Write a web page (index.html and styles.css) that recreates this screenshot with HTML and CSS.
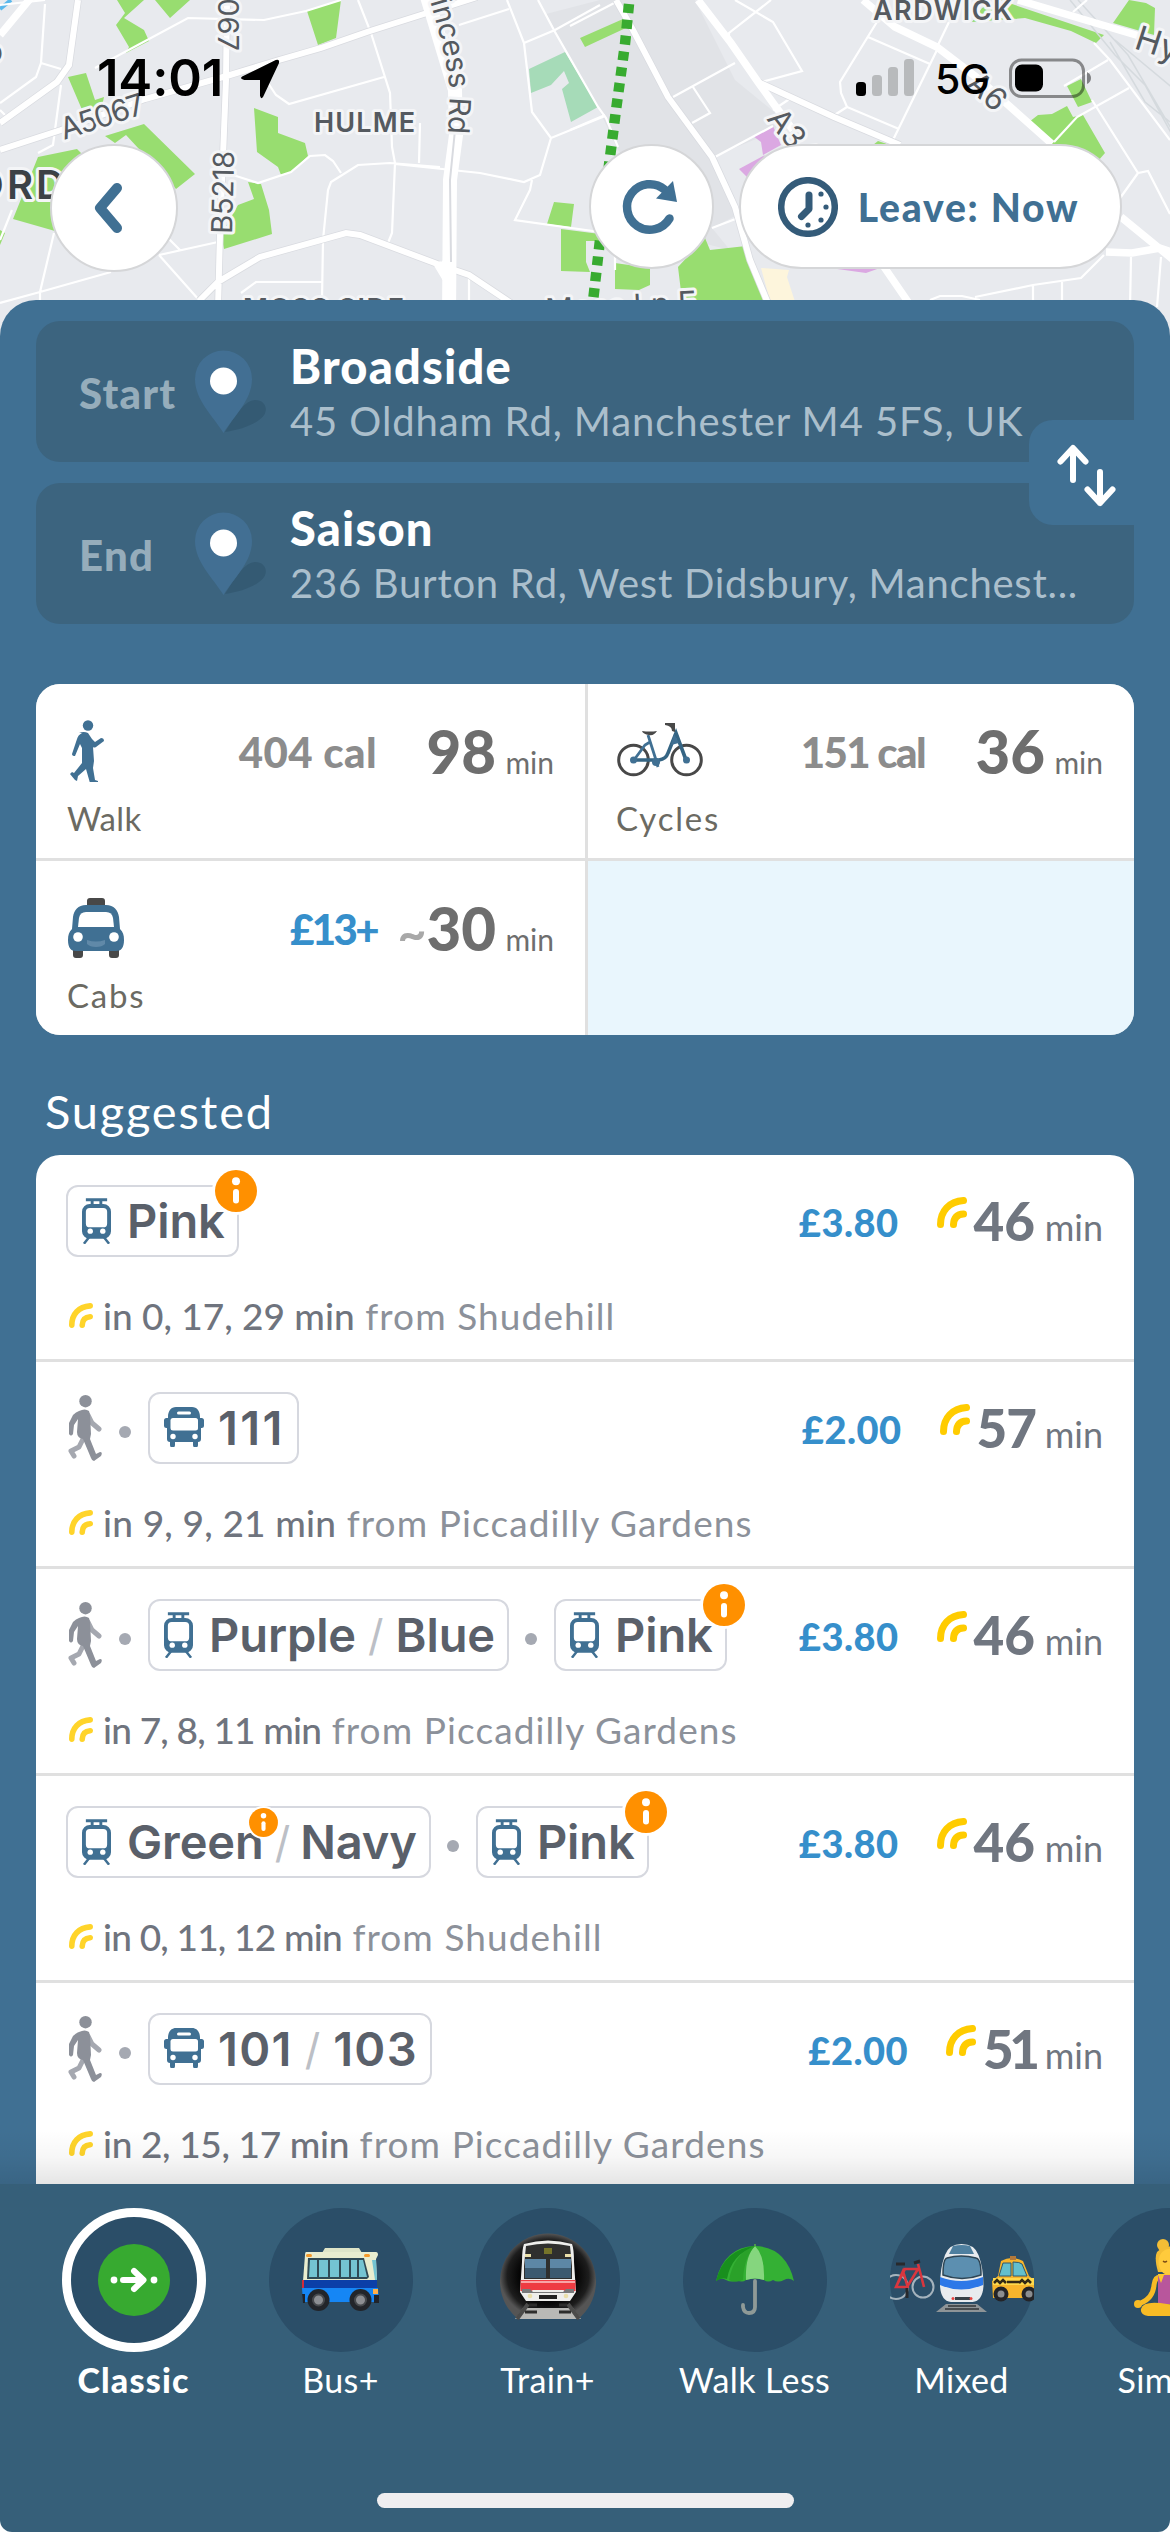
FILE: index.html
```html
<!DOCTYPE html>
<html lang="en">
<head>
<meta charset="utf-8">
<title>Routes</title>
<link rel="stylesheet" href="styles.css">
</head>
<body>
<svg class="sprite" width="0" height="0" aria-hidden="true">
  <symbol id="i-tram" viewBox="0 0 30 48">
    <path d="M4 1h22v3h-5v4h-3V4h-6v4H9V4H4z" fill="#407093"/>
    <path fill-rule="evenodd" d="M8 7h14a8 8 0 0 1 8 8v20a8 8 0 0 1-8 8H8a8 8 0 0 1-8-8V15a8 8 0 0 1 8-8zM8 11a4 4 0 0 0-4 4v12a4 4 0 0 0 4 4h14a4 4 0 0 0 4-4V15a4 4 0 0 0-4-4z" fill="#407093"/>
    <circle cx="8.500" cy="35" r="2.800" fill="#fff"/><circle cx="21.500" cy="35" r="2.800" fill="#fff"/>
    <path d="M7.500 41L2 48M22.500 41L28 48" stroke="#407093" stroke-width="2.600"/>
  </symbol>
  <symbol id="i-bus" viewBox="0 0 40 40">
    <path d="M12 0h16c5 0 8 4 8 10v1h1.500a2.500 2.500 0 0 1 2.500 2.500v5a2.500 2.500 0 0 1-2.500 2.500H37v11a3 3 0 0 1-3 3v3a2.500 2.500 0 0 1-5 0v-3H11v3a2.500 2.500 0 0 1-5 0v-3a3 3 0 0 1-3-3V21h-.5A2.500 2.500 0 0 1 0 18.500v-5A2.500 2.500 0 0 1 2.500 11H4v-1C4 4 7 0 12 0z" fill="#407093"/>
    <rect x="6.500" y="11" width="27.500" height="12.500" rx="2.500" fill="#fff"/><rect x="13" y="4.500" width="14" height="3" rx="1.500" fill="#fff"/>
    <circle cx="9" cy="29.500" r="2.700" fill="#fff"/><circle cx="31" cy="29.500" r="2.700" fill="#fff"/>
  </symbol>
  <symbol id="i-person" viewBox="0 0 34 66">
    <circle cx="17.500" cy="6.200" r="6.200" fill="#8c9099"/>
    <path d="M20 20l4 8 7 6M15 44l-4 8-8 4 3 5" fill="none" stroke="#a5a8b0" stroke-width="5" stroke-linecap="round" stroke-linejoin="round"/>
    <path d="M11 16q6-3 10 0l1 4 1 19-1 5 6 15 4-2q3 0 1 4l-7 5q-2 0-3-3l-8-19q-6-1-6-7l1-13-4 6-1 9q-2 3-4 0V28l4-8q3-3 6-4z" fill="#8c9099"/>
  </symbol>
  <symbol id="i-walk" viewBox="0 0 36 62">
    <circle cx="20" cy="5.500" r="5.200" fill="#407093"/>
    <path d="M11 13q5-2 9 0l4 6 3 3 6-4q3 0 3 3l-8 6q-2 1-3 0l1 14-1 7 2 12 3 1v2h-8l-4-14-8 7-1 5-2-1-5-6 2-2 2 1 8-10V28l-2-4-5 12q-3 0-3-2l5-15q1-4 5-6z" fill="#407093"/>
  </symbol>
  <symbol id="i-wave" viewBox="0 0 30 31">
    <path d="M3.500 27.500C3.500 14 12 4.500 26.500 3.500M16.500 27.500q.5-10 10-10.500" fill="none" stroke="currentColor" stroke-width="7" stroke-linecap="round"/>
  </symbol>
  <symbol id="i-info" viewBox="0 0 48 48">
    <circle cx="24" cy="24" r="24" fill="#fff"/><circle cx="24" cy="24" r="21" fill="#ff9000"/>
    <circle cx="24" cy="14.200" r="4" fill="#fff"/><rect x="21" y="22" width="6" height="14.500" rx="3" fill="#fff"/>
  </symbol>
  <symbol id="i-pin" viewBox="0 0 72 84">
    <path d="M30 82C42 62 50 51 60 50c12 0 15 13 4 20-8 6-20 10-34 12z" fill="#345a73"/>
    <path d="M28.500 83C18 66 0 50 0 29a28.500 28.500 0 0 1 57 0c0 21-18 37-28.500 54z" fill="#426f93"/>
    <circle cx="28.500" cy="31" r="13.500" fill="#fff"/>
  </symbol>
</svg>

<main class="screen">
  <header class="top">
    <svg class="map" viewBox="0 0 1170 340" aria-hidden="true">
      <rect width="1170" height="340" fill="#e8eaee"/>
      <path d="M546 14L600 0H695L735 80 790 125 715 156 737 215 712 228 730 250 690 240 618 150 600 112 565 48z" fill="#e1e3e7"/>
      <g fill="#98dd70">
        <path d="M117 0h27l-20 18 20 12 5 11-23 12 3-6-13-22 9-12zM155 0h35l-20 18zM307 11l34-11-5 38-18 7zM68 77l18-4 9 27 9-3-4 18-17-3zM105 136l39-12 51 50-19 15-50-54-11 8zM38 157l39-8 20 20-42 62-42-12zM254 108l24 9v16l27 10 3 13-17 16-10 3-3-8-21-15zM248 182l13 2 8 26 3 24-48 15-3-14 17-30 16-6zM580 38l43-19 5 8-43 20zM554 202l20 2-3 23-24-3zM561 229l39 5v7h-14v21l4 10-29-1zM0 230l5 3-5 12z"/>
        <path d="M1000 0l104 35-8 8-25-12-46-13-53 4 10-14zM1129 0l17 3 9 5-1 27-41-12zM1067 86l14-7 11 23-14 5zM1029 122l9-7 14-1 15-8 6 11 10-2 22 38-7 8-48-17zM873 145l5-4 12 4zM678 267l27-29 5 12 36-4 17 54h-81zM615 263l35 5v17l-11 5-24-1z"/>
      </g>
      <path d="M529 69l36-17 33 55-27 15-9-33 7-6-5-12-13 14-20 8z" fill="#a6dbb8"/>
      <path d="M753 136l20-10 8 19-18 10-2-13zM739 169l26-14-17 23zM830 268h50l-14 5z" fill="#dba8e2"/>
      <path d="M761 268l28 2-2 7 10 31h-25z" fill="#fdf5dc"/>
      <path d="M1070 0l45 55 30 30 30 55M1078 0l50 55 50 85M1110 42l35 60 25 20M1115 40l60 50" fill="none" stroke="#d5dade" stroke-width="1.500"/>
      <path d="M0 9L11 0" stroke="#5bb8ec" stroke-width="4"/>
      <g fill="none" stroke="#fff" stroke-width="2.200">
        <path d="M95 68L188 18l76 2 42-9 35-11M45 4l-4 59 20 6M41 63l-5 14-36 26M358 0l13 33 19 60 2 54 3 16-3 70-4 10M268 83l8 12 13 9 95-27M230 174l28 9 33-11 19-16 15-1 8 6 8 12M322 300l1-60 5-50 3-8 27-17 32-2 50 4M395 164l85 9 44 9 16-7 11-37 54-22M420 123l-1 40M459 25l50-16M507 0l17 43 8 69 19 26M538 0l17 32 43 75 8 11 12 29M524 43l31-13L600 5M532 180l-2 10-15 30 85 12M0 303l40-11 71-20M40 308v-16l14-59M159 255l59-13M159 255l40 45M168 238l12 12M241 293l15-11h66M469 277v30M61 85l-8 60-15 8M0 240l12-30M0 5l45-5M0 110l5 5"/>
        <path d="M735 0l38 22 29 49-44 12M771 0l-42 33v10M673 97l62-34M693 87l17 26-18 10M715 157l58-31M712 228l26-10M880 17l-40 65 1 11 6 14 52 22M847 107l-14 9M868 37l62 27M949 22l-12 25M937 50l-44 90M1094 43l16 17 60 80M1064 86l44-26M1054 142l23-25 52-29M1092 100l46 73 10-2 22 43M1138 173l-20 28M975 297l58-12 48-7 23-23M930 300l10-4h22l18 4M1033 285v20M1062 282v22M1131 257l-1 50M1161 257l-4 50M570 130l35-15M773 110l18-12M615 250v20M570 26L620 0M1073 12l14-12"/>
      </g>
      <g fill="none" stroke="#d9dbe0" stroke-width="7.500">
        <path d="M0 150l61-20 84-31 85-24 49-15 42-12 46-16 60-19 50-16M0 123l57-41 12-17 9-65M227 0l-1 80-6 153-2 75M199 301l19-19 42-25 86-24 14 2 80 30 29 10 45 30M616 0l17 30 35 67 44 60 23 50 15 53 20 48M758 82l76 35 66 28"/>
      </g>
      <g fill="none" stroke="#fff">
        <path stroke-width="6" d="M0 150l61-20 84-31 85-24 49-15 42-12 46-16 60-19 50-16M0 123l57-41 12-17 9-65M227 0l-1 80-6 153-2 75M199 301l19-19 42-25 86-24 14 2 80 30 29 10 45 30M616 0l17 30 35 67 44 60 23 50 15 53 20 48M758 82l76 35 66 28"/>
        <path stroke-width="7.500" d="M0 35L34-6M698 0l33 43 27 39 15 21 20 27M863 0l32 27 42 20 43 33 72 64M1121 217l55 45M1018 0l118 35 40 13M882 264l33 48M1106 252l26 1 28-5 12 4"/>
        <path stroke-width="14" d="M422-20l33 110 1 45-6 45-1 140"/>
        <path stroke-width="8" d="M437 263l12 20M450 260l-13 10"/>
      </g>
      <path d="M455 130l-5 50 1 82" fill="none" stroke="#d9dbe0" stroke-width="2"/>
      <path d="M629 4l-4 40-9 66-7 55-9 75-8 70" fill="none" stroke="#38ab30" stroke-width="10.500" stroke-dasharray="9 6.900"/>
      <g class="map-text">
        <text transform="translate(64 140) rotate(-18)" font-size="30" textLength="87">A5067</text>
        <text transform="translate(218 51) rotate(90)" font-size="29" text-anchor="end">A5067</text>
        <text transform="translate(232 234) rotate(-88.500)" font-size="29" textLength="83">B5218</text>
        <path id="princess" d="M411-62L431 4Q448 62 450 94L446 172" fill="none" stroke="none"/>
        <text font-size="29.500"><textPath href="#princess" startOffset="66">incess Rd</textPath></text>
        <text class="area" x="314" y="132" font-size="27" textLength="102">HULME</text>
        <text class="area" x="873" y="20" font-size="27" textLength="140">ARDWICK</text>
        <text class="area" x="243" y="318" font-size="27" textLength="162">MOSS SIDE</text>
        <text class="area town" x="-27" y="199" font-size="40" textLength="93">ORD</text>
        <text x="-15" y="62" font-size="30">o</text>
        <text transform="translate(546 321) rotate(-3)" font-size="31">Moss Ln E</text>
        <text transform="translate(1133 48) rotate(18)" font-size="34">Hyde</text>
        <text transform="translate(965 86) rotate(42)" font-size="31">A6</text>
        <text transform="translate(766 119) rotate(52)" font-size="31">A34</text>
      </g>
    </svg>
    <div class="status">
      <span class="clock">14:01</span>
      <svg class="locator" width="42" height="42" viewBox="0 0 40 40"><path d="M3 17.500L35 2q4-1.500 3 3L23 37q-2 3-3-1V21H5q-5-1-2-3.500z"/></svg>
      <svg class="signal" width="60" height="40" viewBox="0 0 60 40"><rect y="24" width="10" height="14" rx="3.500"/><g fill="#b8babc"><rect x="16" y="17" width="10" height="21" rx="3.500"/><rect x="32" y="9" width="10" height="29" rx="3.500"/><rect x="48" y="1" width="10" height="37" rx="3.500"/></g></svg>
      <span class="net">5G</span>
      <svg class="battery" width="84" height="40" viewBox="0 0 84 40"><rect x="1.500" y="2" width="73" height="36.500" rx="11" fill="none" stroke="#000" stroke-opacity=".42" stroke-width="3"/><rect x="6" y="6.500" width="28" height="27" rx="7"/><path d="M78 14q4 2 4 6t-4 6z" fill-opacity=".45"/></svg>
    </div>
    <div class="controls">
      <button class="round back" aria-label="Back"><svg width="34" height="54" viewBox="0 0 34 54"><path d="M25 7L8 27l17 20" fill="none" stroke="#407093" stroke-width="10" stroke-linecap="round" stroke-linejoin="round"/></svg></button>
      <button class="round reload" aria-label="Refresh"><svg width="60" height="60" viewBox="0 0 60 60"><path d="M48.500 41.500a22.800 22.800 0 1 1-5-29" fill="none" stroke="#407093" stroke-width="8.500" stroke-linecap="round"/><path d="M52 4l4 21-21-3.500z" fill="#407093"/></svg></button>
      <button class="pill"><svg width="60" height="60" viewBox="0 0 60 60"><circle cx="30" cy="30" r="26.800" fill="none" stroke="#345b79" stroke-width="6.500"/><path d="M31 18v14l-7.500 7.500" fill="none" stroke="#345b79" stroke-width="7" stroke-linecap="round" stroke-linejoin="round"/><g fill="#345b79"><circle cx="43" cy="17" r="2.600"/><circle cx="48" cy="30" r="2.600"/><circle cx="43" cy="43" r="2.600"/><circle cx="30" cy="48" r="2.600"/></g></svg><span>Leave: Now</span></button>
    </div>
  </header>

  <section class="sheet">
    <div class="stops">
      <div class="stop"><span class="stop-tag">Start</span><svg width="72" height="84"><use href="#i-pin"/></svg><div class="stop-text"><b>Broadside</b><span class="addr addr-a">45 Oldham Rd, Manchester M4 5FS, UK</span></div></div>
      <div class="stop"><span class="stop-tag">End</span><svg width="72" height="84"><use href="#i-pin"/></svg><div class="stop-text"><b>Saison</b><span class="addr addr-b">236 Burton Rd, West Didsbury, Manchest...</span></div></div>
      <button class="swap" aria-label="Swap"><svg width="60" height="60" viewBox="0 0 60 60"><path d="M17 36V5M4.500 17.500L17 4l12.500 13.500M44 28v31M31.500 45.500L44 59l12.500-13.500" fill="none" stroke="#fff" stroke-width="6" stroke-linecap="round" stroke-linejoin="round"/></svg></button>
    </div>

    <div class="modes">
      <div class="mode">
        <div class="mode-top"><svg width="36" height="62"><use href="#i-walk"/></svg><span class="cal">404 cal</span><span class="dur">98 <small>min</small></span></div>
        <div class="mode-name">Walk</div>
      </div>
      <div class="mode">
        <div class="mode-top"><svg width="86" height="56" viewBox="0 0 86 56" fill="none"><circle cx="16.500" cy="37" r="14.800" stroke="#484848" stroke-width="3"/><circle cx="69.500" cy="37" r="14.800" stroke="#484848" stroke-width="3"/><path d="M17 37l11-15 5-3M31 12l8 25 2 7" stroke="#407093" stroke-width="2.800"/><path d="M16 37h26q7-1 9-7l8-20 10 27" stroke="#356584" stroke-width="3.600"/><path d="M57 11l5 9-8 2z" fill="#407093"/><circle cx="16.500" cy="37" r="3.500" fill="#407093"/><circle cx="69.500" cy="37" r="3.500" fill="#407093"/><circle cx="39" cy="39" r="4" fill="#407093"/><path d="M25 8q8 1 15 0-3 5-8 4-6-1-7-4zM48 0h10v9l-3-1q0-5-7-6z" fill="#484848"/></svg><span class="cal cal-b">151 cal</span><span class="dur">36 <small>min</small></span></div>
        <div class="mode-name wide">Cycles</div>
      </div>
      <div class="mode">
        <div class="mode-top"><svg width="56" height="60" viewBox="0 0 56 60"><path d="M19 9V3q0-3 3-3h12q3 0 3 3v6zM5 50h10v7q0 3-3 3H8q-3 0-3-3zM41 50h10v7q0 3-3 3h-4q-3 0-3-3z" fill="#484848"/><path d="M18 7h20c8 0 12 5 13 12l1 12c3 3 4 6 4 11 0 8-3 11-8 11H8c-5 0-8-3-8-11 0-5 1-8 4-11l1-12C6 12 10 7 18 7z" fill="#407093"/><path d="M18 14h20q6 0 7 6l1 9H10l1-9q1-6 7-6z" fill="#fff"/><circle cx="10" cy="39" r="4.800" fill="#fff"/><circle cx="46" cy="39" r="4.800" fill="#fff"/><path d="M19 42q9 3 18 0v4q-3 3-9 3t-9-3z" fill="#6089a8"/></svg><span class="cal fare">£13+</span><span class="dur"><i>~</i>30 <small>min</small></span></div>
        <div class="mode-name wide">Cabs</div>
      </div>
      <div class="mode empty"></div>
    </div>

    <h2>Suggested</h2>

    <div class="routes">
      <article class="route">
        <div class="legs">
          <span class="chip"><svg width="29" height="47"><use href="#i-tram"/></svg><em>Pink</em><svg class="info"><use href="#i-info"/></svg></span>
          <span class="cost">£3.80</span><svg class="live"><use href="#i-wave"/></svg><span class="time">46 <small>min</small></span>
        </div>
        <p><svg><use href="#i-wave"/></svg><b class="snug">in 0, 17, 29 min</b> from Shudehill</p>
      </article>
      <article class="route">
        <div class="legs">
          <svg class="person"><use href="#i-person"/></svg><i class="dot"></i>
          <span class="chip num ones"><svg width="40" height="40"><use href="#i-bus"/></svg><em>111</em></span>
          <span class="cost">£2.00</span><svg class="live"><use href="#i-wave"/></svg><span class="time slim">57 <small>min</small></span>
        </div>
        <p><svg><use href="#i-wave"/></svg><b>in 9, 9, 21 min</b> from Piccadilly Gardens</p>
      </article>
      <article class="route">
        <div class="legs">
          <svg class="person"><use href="#i-person"/></svg><i class="dot"></i>
          <span class="chip"><svg width="29" height="47"><use href="#i-tram"/></svg><em>Purple</em><i class="slash">/</i><em>Blue</em></span><i class="dot mid"></i>
          <span class="chip"><svg width="29" height="47"><use href="#i-tram"/></svg><em>Pink</em><svg class="info"><use href="#i-info"/></svg></span>
          <span class="cost">£3.80</span><svg class="live"><use href="#i-wave"/></svg><span class="time">46 <small>min</small></span>
        </div>
        <p><svg><use href="#i-wave"/></svg><b class="tight">in 7, 8, 11 min</b> from Piccadilly Gardens</p>
      </article>
      <article class="route">
        <div class="legs">
          <span class="chip dense"><svg width="29" height="47"><use href="#i-tram"/></svg><em class="flag">Green<svg><use href="#i-info"/></svg></em><i class="slash">/</i><em>Navy</em></span><i class="dot mid"></i>
          <span class="chip"><svg width="29" height="47"><use href="#i-tram"/></svg><em>Pink</em><svg class="info"><use href="#i-info"/></svg></span>
          <span class="cost">£3.80</span><svg class="live"><use href="#i-wave"/></svg><span class="time">46 <small>min</small></span>
        </div>
        <p><svg><use href="#i-wave"/></svg><b class="tight">in 0, 11, 12 min</b> from Shudehill</p>
      </article>
      <article class="route">
        <div class="legs">
          <svg class="person"><use href="#i-person"/></svg><i class="dot"></i>
          <span class="chip num"><svg width="40" height="40"><use href="#i-bus"/></svg><em>101</em><i class="slash">/</i><em>103</em></span>
          <span class="cost">£2.00</span><svg class="live"><use href="#i-wave"/></svg><span class="time slimmer">51 <small>min</small></span>
        </div>
        <p><svg><use href="#i-wave"/></svg><b class="snugger">in 2, 15, 17 min</b> from Piccadilly Gardens</p>
      </article>
    </div>
  </section>

  <nav class="tabs">
    <div class="tab active"><span class="disc"><svg width="72" height="72" viewBox="0 0 72 72"><circle cx="36" cy="36" r="36" fill="#37aa30"/><circle cx="16" cy="36" r="3.400" fill="#fff"/><circle cx="56" cy="36" r="3.400" fill="#fff"/><path d="M25 36h20M36 27l9.500 9-9.500 9" fill="none" stroke="#fff" stroke-width="6" stroke-linecap="round" stroke-linejoin="round"/></svg></span><span>Classic</span></div>
    <div class="tab"><span class="disc"><svg width="80" height="66" viewBox="0 0 80 66"><path d="M24 1h34l3 5H21z" fill="#dfe5c8"/><path d="M5 5h70q2 0 2 3l-2 4 1 22H2L4 8q0-3 1-3z" fill="#e9edcf"/><path d="M7 11h56l5 19-2 2H6z" fill="#2f4a55"/><g fill="#74c4d2"><path d="M9 13h7v17H8zM18 13h9v17h-9zM29 13h9v17h-9zM40 13h8v17h-8zM50 13h6v17h-6zM58 13h4l4 17h-8zM71 13h4l1 20h-2z"/></g><path d="M1 33h75v9H1z" fill="#0b3fa8"/><path d="M1 41h76l1 14H2z" fill="#1586f5"/><path d="M1 33h2v8H1z" fill="#d02b3a"/><rect x="5" y="7" width="6" height="3" rx="1.500" fill="#f59a2b"/><rect x="63" y="7" width="6" height="3" rx="1.500" fill="#f59a2b"/><path d="M72 42h5v5h-5z" fill="#ffb04a"/><path d="M1 47h3v9H2zM73 48h5v8h-5z" fill="#20242a"/><g fill="#22252a"><circle cx="17.500" cy="53" r="11"/><circle cx="59.500" cy="53" r="11"/></g><g fill="#8d8f93" stroke="#46494d" stroke-width="2"><circle cx="17.500" cy="53" r="5.500"/><circle cx="59.500" cy="53" r="5.500"/></g></svg></span><span>Bus+</span></div>
    <div class="tab"><span class="disc"><svg width="96" height="96" viewBox="0 0 96 96"><defs><radialGradient id="tunnel"><stop offset=".6" stop-color="#050505"/><stop offset=".85" stop-color="#1d1d1d"/><stop offset="1" stop-color="#555"/></radialGradient></defs><path d="M18 87A48 48 0 1 1 78 87z" fill="url(#tunnel)"/><path d="M23 76h50l8 11H15z" fill="#b9b9b6"/><path d="M28 72l-11 15M68 72l11 15" stroke="#4b4b4a" stroke-width="4"/><path d="M24 12q24-7 48 0 2 5 2 18l2 30-6 9H26l-6-9 2-30q0-13 2-18z" fill="#eeeeec"/><path d="M26 14q22-5 44 0l2 20v13H24V34z" fill="#2f2f2e"/><rect x="25" y="27" width="21" height="19" fill="#5d87a6"/><rect x="50" y="27" width="21" height="19" fill="#5d87a6"/><path d="M25 36h21v10H25zM50 36h21v10H50z" fill="#3c5a70"/><path d="M20.500 48h55v11q-10 2-12-1H33q-3 3-12.500 1z" fill="#ee3b42"/><path d="M21 50h54" stroke="#fbc9c8" stroke-width="1.500"/><path d="M22 57h8l3 3h30l3-3h8v4H22z" fill="#77797a"/><rect x="44" y="16" width="8" height="6" fill="#77742a"/><g fill="#eadfa9"><rect x="25" y="22" width="6" height="3"/><rect x="65" y="22" width="6" height="3"/><circle cx="30" cy="64" r="2.300"/><circle cx="66" cy="64" r="2.300"/></g><path d="M39 63h18v4H39z" fill="#222"/><path d="M29 73h8M59 73h8M25 80h12M59 80h12" stroke="#2d2d2c" stroke-width="3"/></svg></span><span>Train+</span></div>
    <div class="tab"><span class="disc"><svg width="78" height="74" viewBox="0 0 78 74"><path d="M39 38v26q0 6-6 6-5 0-6-6v-2" fill="none" stroke="#8f9a97" stroke-width="3.800" stroke-linecap="round"/><path d="M38 5V1h2v4" fill="#4c9a4c"/><path d="M0 38Q8 4 39 3q31 1 39 35-5-4-10-1-6 3-11 0-5 3-9 0-9-3-18 0-4 3-9 0-5 3-11 0Q5 34 0 38z" fill="#34b034"/><path d="M30 37Q29 13 39 3q10 10 9 34-9-3-18 0z" fill="#85d67e"/><path d="M13 37Q18 10 39 3 28 14 27 37l-3 1q-6 2-11-1z" fill="#2aa129"/><path d="M0 38Q8 6 39 3 15 12 11 36q-5-2-11 2z" fill="#188f1d"/></svg></span><span>Walk Less</span></div>
    <div class="tab"><span class="disc"><svg width="144" height="72" viewBox="0 0 144 72"><g fill="none" stroke="#a5b3bd" stroke-width="2"><circle cx="6" cy="43" r="12"/><circle cx="33" cy="43" r="10.500"/></g><path d="M6 43l9-18h13L17 43H6l7-16 5 17M28 20l6 23" fill="none" stroke="#d9363e" stroke-width="2.600"/><path d="M6 20h9M24 19l6-2M17 44v10" fill="none" stroke="#28292c" stroke-width="3"/><path d="M56 60h31l10 8H46z" fill="#8e9497"/><path d="M55 65h34M58 62h28" stroke="#484d50" stroke-width="2"/><path d="M71.500 0q13 0 17 11 5 13 5 31-1 15-11 16H61q-10-1-11-16 0-18 5-31 4-11 16.500-11z" fill="#e8ebee"/><path d="M63 2q9-2 17 0l4 8H59z" fill="#4e7f9f"/><path d="M57 14q14-4 29 0 5 1 5 17-19 7-38 0 0-16 4-17z" fill="#5c8fb0" stroke="#2e4554" stroke-width="1.500"/><path d="M50 33q21 8 43 0v8q-22 9-43 0z" fill="#2d78e8"/><path d="M65 53h15v3H65z" fill="#374147"/><circle cx="63" cy="54.500" r="1.500" fill="#e74440"/><circle cx="81" cy="54.500" r="1.500" fill="#e74440"/><path d="M103 54l-1-17 6-5 3-15q11-6 22 0l6 15 5 4v18z" fill="#f7b52c"/><path d="M109 32l4-13h8v13zM123 32V18q7 0 9 2l5 12z" fill="#63bfcd" stroke="#31586a" stroke-width="1"/><path d="M103 34h41v7h-41z" fill="#ffd94b"/><path d="M104 39l3-3 3 3 3-3 3 3M129 39l3-3 3 3 3-3 3 3M117 38h12" fill="none" stroke="#332a16" stroke-width="2.500"/><rect x="120" y="12" width="6" height="4" fill="#b3783a"/><g fill="#232428"><circle cx="111" cy="50" r="7.500"/><circle cx="139" cy="50" r="7.500"/></g><g fill="#8b8d90"><circle cx="111" cy="50" r="3.500"/><circle cx="139" cy="50" r="3.500"/></g></svg></span><span>Mixed</span></div>
    <div class="tab"><span class="disc"><svg width="70" height="82" viewBox="0 -4 70 82"><circle cx="29" cy="2" r="6" fill="#f3bd35"/><path d="M24 29q-4-14-1-20 12-11 24 0 3 12 0 20z" fill="#f3bd35"/><ellipse cx="35" cy="19" rx="10.500" ry="13" fill="#ffcb3c"/><path d="M29 18q2 2 4 0M37 18q2 2 4 0" fill="none" stroke="#7a4c16" stroke-width="1.200"/><path d="M26 34q-5 0-6 8-1 13-13 18M44 34q5 0 6 8 1 13 13 18" fill="none" stroke="#f8bb25" stroke-width="5" stroke-linecap="round"/><path d="M24 31h22v30H24z" fill="#ffc62f"/><path d="M24 32l3 8 3-8h10l3 8 3-8v29H24z" fill="#b8569c"/><path d="M7 66q2-9 26-5l30 2q2 9-8 10H14q-8-1-7-7z" fill="#f8bb25"/><circle cx="4" cy="61" r="4" fill="#f8bb25"/></svg></span><span>Simple</span></div>
    <div class="home"></div>
  </nav>
</main>
</body>
</html>
```
FILE: styles.css
```css
* { box-sizing: border-box; }
html { background: #fff; }
body { margin: 0; width: 1170px; height: 2532px; overflow: hidden; font-family: Lato, "Liberation Sans", sans-serif; }
button { border: 0; padding: 0; margin: 0; background: none; font: inherit; }
svg { display: block; flex: none; }
.sprite { position: absolute; }
.screen { display: flex; flex-direction: column; width: 1170px; height: 2532px; overflow: hidden; border-radius: 0 0 12px 12px; }

/* map header */
.top { position: relative; height: 340px; flex: none; margin-bottom: -40px; }
.map { width: 1170px; height: 340px; }
.map-text { font-family: Inter, sans-serif; fill: #555a60; stroke: #f4f5f7; stroke-width: 6px; stroke-linejoin: round; paint-order: stroke; }
.map-text .area { font-weight: 600; letter-spacing: 1px; }
.map-text .town { fill: #3c4146; }
.status { position: absolute; inset: 0 0 auto; display: flex; align-items: flex-start; height: 110px; padding: 58px 77px 0 97px; font-family: Inter, sans-serif; }
.clock { font-size: 51px; line-height: 40px; font-weight: 600; letter-spacing: -.2px; width: 142px; }
.locator { margin-right: auto; }
.signal { margin-right: 19px; }
.net { font-size: 41px; font-weight: 500; line-height: 43px; width: 74px; letter-spacing: -1px; }
.controls { position: absolute; inset: 144px 48.5px auto 50px; display: flex; }
.round, .pill { display: flex; align-items: center; justify-content: center; background: #fff; border: 2px solid #d5d6d8; }
.round { width: 125px; height: 125px; border-radius: 50%; }
.back { width: 128px; height: 128px; margin-right: auto; }
.back svg { margin-right: 10px; }
.reload { margin-right: 25px; }
.pill { width: 383px; height: 125px; border-radius: 63px; gap: 20px; padding-right: 3px; color: #407093; font-size: 39px; font-weight: 900; letter-spacing: 1.8px; }

/* journey sheet */
.sheet { position: relative; flex: none; height: 1884px; padding: 21px 36px 0; overflow: hidden; border-radius: 36px 36px 0 0; background: #407093; }
.sheet::after { content: ""; position: absolute; inset: auto 0 0; height: 54px; background: linear-gradient(rgba(0,0,0,0), rgba(0,0,0,.03) 50%, rgba(0,0,0,.1)); }
.stops { position: relative; display: flex; flex-direction: column; gap: 21px; }
.stop { display: flex; align-items: center; height: 141px; padding-left: 43px; border-radius: 24px; background: #3c647f; }
.stop-tag { width: 116px; margin-top: 2px; font-size: 42px; font-weight: 900; letter-spacing: 1.2px; color: #96adbb; }
.stop-text { display: flex; flex-direction: column; gap: 4px; margin: 1px 0 0 23px; color: #fff; }
.stop-text b { font-size: 47px; line-height: 54px; font-weight: 900; letter-spacing: 1.2px; }
.addr { font-size: 40px; line-height: 48px; color: #abbfcc; white-space: nowrap; }
.addr-a { letter-spacing: .9px; }
.addr-b { letter-spacing: .75px; }
.swap { position: absolute; right: 0; top: 99px; display: flex; align-items: center; justify-content: center; width: 105px; height: 105px; border-radius: 24px 0 0 24px; background: #407093; }
.swap svg { margin: 2px 0 0 8px; overflow: visible; }

.modes { display: grid; grid-template-columns: 549px 546px; grid-auto-rows: 174px; gap: 3px; margin-top: 60px; overflow: hidden; border-radius: 24px; background: #e0e0e0; }
.mode { padding: 31px 31px 0; background: #fff; }
.mode:nth-child(even) { padding-left: 28px; }
.mode.empty { background: #e9f6fd; }
.mode-top { display: flex; align-items: center; height: 70px; line-height: 70px; }
.mode-top svg { margin: 1px 0 0 1px; }
.cal { margin: 3px 0 0 auto; font-size: 42px; font-weight: 900; letter-spacing: .4px; color: #8c8c8c; }
.cal-b { letter-spacing: -1.6px; margin-right: 1px; }
.cal.fare { letter-spacing: -2.600px; color: #368fcb; }
.dur { width: 177px; margin-top: 12px; text-align: right; font-size: 60px; font-weight: 900; color: #6e6e6e; white-space: nowrap; }
.dur small { margin-left: -5px; font-size: 30px; font-weight: 400; }
.dur i { font-style: normal; font-size: 50px; font-weight: 700; color: #a8a8a8; }
.mode-name { margin-top: 13px; font-size: 33px; line-height: 40px; letter-spacing: .3px; color: #6b6a62; }
.mode-name.wide { letter-spacing: 1.8px; }
h2 { height: 120px; margin: 0; padding: 49px 0 0 9px; font-size: 47px; line-height: 54px; font-weight: 400; letter-spacing: 1.8px; color: #fff; }

/* route list */
.routes { border-radius: 24px 24px 0 0; overflow: hidden; background: #fff; }
.route { height: 207px; padding: 30px 31px 0 30px; border-bottom: 3px solid #e0e0e0; }
.legs { display: flex; align-items: center; height: 72px; line-height: 72px; }
.chip { position: relative; display: flex; align-items: center; height: 72px; padding: 0 12px 0 14px; border: 2px solid #d6d8df; border-radius: 12px; font-family: Inter, sans-serif; font-size: 47px; font-weight: 600; color: #5a606a; }
.chip > svg:first-child { margin: -2px 14px 0 0; }
.chip > svg[width="29"] { margin-right: 16px; }
.chip em { font-style: normal; letter-spacing: -.1px; }
.chip.num em { letter-spacing: 1.3px; }
.chip.ones em { letter-spacing: 2.4px; }
.slash { font-style: normal; font-size: 43px; font-weight: 400; color: #bcbfc6; margin: 0 12px; }
.num .slash { margin: 0 13px 0 12px; }
.dense .slash { margin: 0 10px 0 11px; }
.info { position: absolute; width: 48px; height: 48px; right: -23px; top: -20px; }
.flag { position: relative; }
.flag svg { position: absolute; width: 33px; height: 33px; right: -16px; top: 0; }
.person { width: 34px; height: 66px; margin-left: 2px; }
.dot { width: 12px; height: 12px; margin: 8px 17px 0 17px; border-radius: 50%; background: #a5a9b2; }
.dot.mid { margin: 8px 17px 0 16px; }
.cost { margin: 2px 0 0 auto; font-size: 38px; font-weight: 900; color: #368fcb; letter-spacing: .5px; }
.live { align-self: flex-start; width: 30px; height: 31px; margin: 12px 7px 0 38px; color: #fc0; }
.time { margin-top: 5px; font-size: 53px; font-weight: 900; color: #707680; white-space: nowrap; }
.time small { margin-left: -3px; font-size: 36px; font-weight: 400; letter-spacing: 0; }
.time.slim { letter-spacing: -1px; }
.time.slimmer { letter-spacing: -4.500px; }
.time.slimmer small { margin-left: 1px; }
.route p { display: flex; align-items: baseline; margin: 37px 0 0 3px; font-size: 37px; line-height: 44px; letter-spacing: 1.1px; color: #8c919a; white-space: pre; }
.route p b { font-weight: 500; letter-spacing: .2px; color: #6f747e; }
.route p .snug { letter-spacing: 0; }
.route p .snugger { letter-spacing: -.35px; }
.route p .tight { letter-spacing: -.8px; }
.route p svg { width: 24px; height: 25px; margin-right: 10px; color: #ffd42a; align-self: center; margin-top: -1px; }

/* profile tabs */
.tabs { position: relative; display: flex; flex: none; height: 348px; padding: 24px 0 0 30px; background: #365f79; }
.tab { display: flex; flex: none; flex-direction: column; align-items: center; gap: 8px; width: 207px; font-size: 34px; line-height: 40px; letter-spacing: .4px; color: #fff; }
.tab.active { font-weight: 900; letter-spacing: 1.2px; }
.disc { display: flex; align-items: center; justify-content: center; width: 144px; height: 144px; border-radius: 50%; background: #2b4e68; }
.active .disc { border: 9px solid #fff; }
.home { position: absolute; left: 377px; bottom: 24px; width: 417px; height: 15px; border-radius: 8px; background: #efeef0; }
```
